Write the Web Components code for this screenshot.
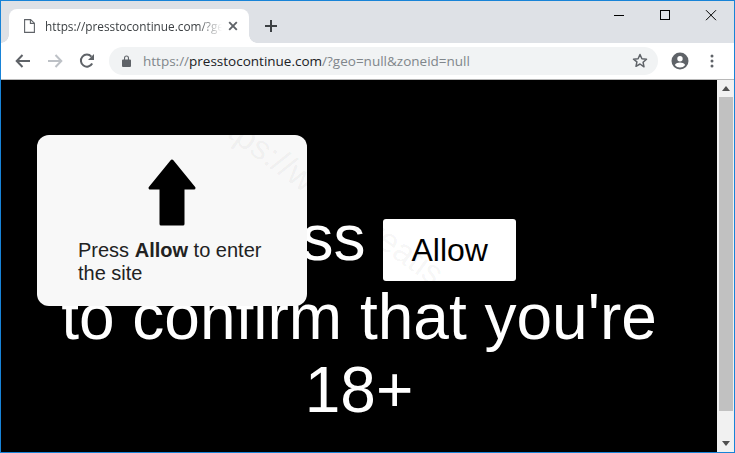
<!DOCTYPE html>
<html>
<head>
<meta charset="utf-8">
<title>Press Allow</title>
<style>
  html, body { margin: 0; height: 100%; overflow: hidden; background: #000; }
</style>
</head>
<body>
<browser-window>
  <tab-strip slot="tabs" title-text="https://presstocontinue.com/?geo=null&amp;zoneid=null"></tab-strip>
  <nav-toolbar slot="toolbar"></nav-toolbar>
  <landing-page>
    <allow-popup slot="popup">Press <b>Allow</b> to enter the site</allow-popup>
    <water-mark slot="mark">https://www.greatis.com</water-mark>
  </landing-page>
</browser-window>

<script>
  class BrowserWindow extends HTMLElement {
    constructor() {
      super();
      this.attachShadow({ mode: "open" });
      this.shadowRoot.innerHTML = `
        <style>
          :host {
            display: flex;
            flex-direction: column;
            box-sizing: border-box;
            width: 735px;
            height: 453px;
            border: 1px solid #1883d7;
            background: #fff;
          }
          .view { flex: 1; display: flex; min-height: 0; }
          .main { flex: 1; min-width: 0; position: relative; overflow: hidden; }
        </style>
        <slot name="tabs"></slot>
        <slot name="toolbar"></slot>
        <div class="view">
          <div class="main"><slot></slot></div>
          <page-scrollbar></page-scrollbar>
        </div>
      `;
    }
  }

  class TabStrip extends HTMLElement {
    constructor() {
      super();
      this.attachShadow({ mode: "open" });
      this.shadowRoot.innerHTML = `
        <style>
          :host {
            display: flex;
            height: 42px;
            box-sizing: border-box;
            padding: 8px 0 0 8px;
            background: #dee1e6;
            flex: none;
          }
          .tab {
            position: relative;
            box-sizing: border-box;
            width: 240px;
            height: 34px;
            display: flex;
            align-items: center;
            padding: 0 11px 0 15px;
            background: #fff;
            border-radius: 8px 8px 0 0;
          }
          .tab::before, .tab::after {
            content: "";
            position: absolute;
            bottom: 0;
            width: 8px;
            height: 8px;
          }
          .tab::before { left: -8px; background: radial-gradient(circle at 0 0, transparent 7.5px, #fff 8px); }
          .tab::after { right: -8px; background: radial-gradient(circle at 100% 0, transparent 7.5px, #fff 8px); }
          .file { flex: none; margin-right: 10px; }
          .title {
            flex: 1;
            min-width: 0;
            overflow: hidden;
            white-space: nowrap;
            font: 11.8px/16px "Open Sans", "Noto Sans", sans-serif;
            color: #3c4043;
            -webkit-mask-image: linear-gradient(to right, #000 86%, transparent 100%);
            mask-image: linear-gradient(to right, #000 86%, transparent 100%);
          }
          .close { flex: none; margin-left: 6px; }
          .plus { margin: 11px 0 0 16px; flex: none; }
          .controls {
            margin-left: auto;
            display: flex;
            align-self: flex-start;
            margin-top: -8px;
          }
          .controls svg { display: block; width: 46px; height: 30px; }
        </style>
        <div class="tab">
          <svg class="file" width="11" height="14" viewBox="0 0 11 14" fill="none" stroke="#5f6368" stroke-width="1.1">
            <path d="M.6 .6h6l3.8 3.6v9.2H.6z"/><path d="M6.4 .8v3.6h3.8"/>
          </svg>
          <span class="title"></span>
          <svg class="close" width="10" height="10" viewBox="0 0 10 10" stroke="#5f6368" stroke-width="1.9" fill="none">
            <path d="M1.2 1.2l7.6 7.6M8.8 1.2l-7.6 7.6"/>
          </svg>
        </div>
        <svg class="plus" width="12" height="12" viewBox="0 0 12 12" stroke="#3c4043" stroke-width="2" fill="none">
          <path d="M6 0v12M0 6h12"/>
        </svg>
        <div class="controls">
          <svg viewBox="0 0 46 30" fill="none" stroke="#000" stroke-width="1"><path d="M18 14.5h10"/></svg>
          <svg viewBox="0 0 46 30" fill="none" stroke="#000" stroke-width="1"><rect x="18.5" y="9.5" width="9" height="9"/></svg>
          <svg viewBox="0 0 46 30" fill="none" stroke="#000" stroke-width="1"><path d="M18 9.2l10 10M28 9.2l-10 10"/></svg>
        </div>
      `;
      this.shadowRoot.querySelector(".title").textContent = this.getAttribute("title-text");
    }
  }

  class NavToolbar extends HTMLElement {
    constructor() {
      super();
      this.attachShadow({ mode: "open" });
      this.shadowRoot.innerHTML = `
        <style>
          :host {
            display: flex;
            align-items: center;
            flex: none;
            box-sizing: border-box;
            height: 37px;
            padding: 0 0 1px 6px;
            background: #fff;
            border-bottom: 1px solid #b8b8b8;
          }
          .btn { flex: none; width: 32px; height: 28px; display: flex; align-items: center; justify-content: center; }
          .omni {
            flex: none;
            box-sizing: border-box;
            width: 549px;
            height: 28px;
            margin-left: 6px;
            display: flex;
            align-items: center;
            padding: 0 10px 0 13px;
            border-radius: 14px;
            background: #f1f3f4;
          }
          .url {
            flex: 1;
            margin-left: 12px;
            font: 13.5px/18px "Open Sans", "Noto Sans", sans-serif;
            color: #80868b;
            white-space: nowrap;
          }
          .url b { font-weight: 400; color: #202124; }
        </style>
        <div class="btn">
          <svg width="16" height="14" viewBox="0 0 16 14" fill="none" stroke="#5f6368" stroke-width="2"><path d="M15 7H2M7.5 1L1.7 7l5.8 6"/></svg>
        </div>
        <div class="btn">
          <svg width="16" height="14" viewBox="0 0 16 14" fill="none" stroke="#bdc1c6" stroke-width="2"><path d="M1 7h13M8.5 1l5.8 6-5.8 6"/></svg>
        </div>
        <div class="btn">
          <svg width="16" height="16" viewBox="0 0 16 16" fill="none"><path d="M13.2 10.5A6 6 0 1 1 12.4 3.6" stroke="#5f6368" stroke-width="2"/><path d="M15 1v6H9z" fill="#5f6368"/></svg>
        </div>
        <div class="omni">
          <svg width="9" height="12" viewBox="0 0 9 12" fill="#5f6368"><path d="M1 4.500h1V3a2.500 2.500 0 0 1 5 0v1.500h1a1 1 0 0 1 1 1V11a1 1 0 0 1-1 1H1a1 1 0 0 1-1-1V5.500a1 1 0 0 1 1-1zM3.100 4.500h2.800V3a1.400 1.400 0 0 0-2.800 0z"/></svg>
          <span class="url">https://<b>presstocontinue.com</b>/?geo=null&amp;zoneid=null</span>
          <svg width="16" height="15" viewBox="0 0 16 15" fill="none" stroke="#5f6368" stroke-width="1.5" stroke-linejoin="round"><path d="M8 1.500l1.900 4.200 4.600.5-3.400 3.100.9 4.500L8 11l-4 2.300.9-4.500L1.500 6.200l4.600-.5z"/></svg>
        </div>
        <div class="btn" style="margin-left:6px">
          <svg width="18" height="18" viewBox="0 0 18 18"><circle cx="9" cy="9" r="8.500" fill="#5f6368"/><circle cx="9" cy="6.800" r="2.700" fill="#fff"/><path d="M3.800 13c1.200-1.800 3.200-2.500 5.200-2.500s4 .7 5.200 2.500A6.500 6.500 0 0 1 9 15.500 6.500 6.500 0 0 1 3.800 13z" fill="#fff"/></svg>
        </div>
        <div class="btn">
          <svg width="4" height="14" viewBox="0 0 4 14" fill="#5f6368"><circle cx="2" cy="2" r="1.500"/><circle cx="2" cy="7" r="1.500"/><circle cx="2" cy="12" r="1.500"/></svg>
        </div>
      `;
    }
  }

  class PageScrollbar extends HTMLElement {
    constructor() {
      super();
      this.attachShadow({ mode: "open" });
      this.shadowRoot.innerHTML = `
        <style>
          :host {
            display: flex;
            flex-direction: column;
            flex: none;
            width: 17px;
            background: #f1f1f1;
          }
          .arrow { flex: none; height: 17px; display: flex; align-items: center; justify-content: center; }
          .track { flex: 1; padding: 0 1px 24px 2px; min-height: 0; }
          .thumb { height: 100%; background: #c1c1c1; }
        </style>
        <div class="arrow">
          <svg width="8" height="5" viewBox="0 0 8 5" fill="#505050"><path d="M4 0l4 5H0z"/></svg>
        </div>
        <div class="track"><div class="thumb"></div></div>
        <div class="arrow">
          <svg width="8" height="5" viewBox="0 0 8 5" fill="#505050"><path d="M0 0h8L4 5z"/></svg>
        </div>
      `;
    }
  }

  class LandingPage extends HTMLElement {
    constructor() {
      super();
      this.attachShadow({ mode: "open" });
      this.shadowRoot.innerHTML = `
        <style>
          :host { display: block; height: 100%; background: #000; }
          h1 {
            margin: 0;
            padding: 122px 8px 0;
            font: 400 64px/73px "Liberation Sans", Arial, sans-serif;
            color: #fff;
            text-align: center;
          }
          .allow {
            display: inline-block;
            box-sizing: border-box;
            width: 133px;
            height: 62px;
            border-radius: 3px;
            background: #fff;
            color: #000;
            font-size: 32px;
            line-height: 62px;
            text-align: center;
            vertical-align: -1px;
          }
        </style>
        <h1>Press <span class="allow">Allow</span><br>to confirm that you're 18+</h1>
        <slot name="popup"></slot>
        <slot name="mark"></slot>
      `;
    }
  }

  class AllowPopup extends HTMLElement {
    constructor() {
      super();
      this.attachShadow({ mode: "open" });
      this.shadowRoot.innerHTML = `
        <style>
          :host {
            position: absolute;
            left: 36px;
            top: 55px;
            box-sizing: border-box;
            width: 270px;
            height: 171px;
            padding: 23px 40px 0 41px;
            border-radius: 12px;
            background: #f8f8f8;
            color: #222;
            font: 20px/23px "Liberation Sans", Arial, sans-serif;
          }
          svg { display: block; margin: 0 auto 11px; transform: translateX(-1px); }
        </style>
        <svg width="50" height="70" viewBox="0 0 50 70">
          <path d="M25 3L3 30h11v36h22V30h11z" fill="#000" stroke="#000" stroke-width="3" stroke-linejoin="round"/>
        </svg>
        <slot></slot>
      `;
    }
  }

  class WaterMark extends HTMLElement {
    constructor() {
      super();
      this.attachShadow({ mode: "open" });
      this.shadowRoot.innerHTML = `
        <style>
          :host {
            position: absolute;
            left: 220px;
            top: 13px;
            transform-origin: 0 0;
            transform: rotate(36deg);
            pointer-events: none;
            white-space: nowrap;
            color: rgba(0, 0, 0, .05);
            font: 34px/40px "Liberation Sans", Arial, sans-serif;
          }
        </style>
        <slot></slot>
      `;
    }
  }

  customElements.define("browser-window", BrowserWindow);
  customElements.define("tab-strip", TabStrip);
  customElements.define("nav-toolbar", NavToolbar);
  customElements.define("page-scrollbar", PageScrollbar);
  customElements.define("landing-page", LandingPage);
  customElements.define("allow-popup", AllowPopup);
  customElements.define("water-mark", WaterMark);
</script>
</body>
</html>
